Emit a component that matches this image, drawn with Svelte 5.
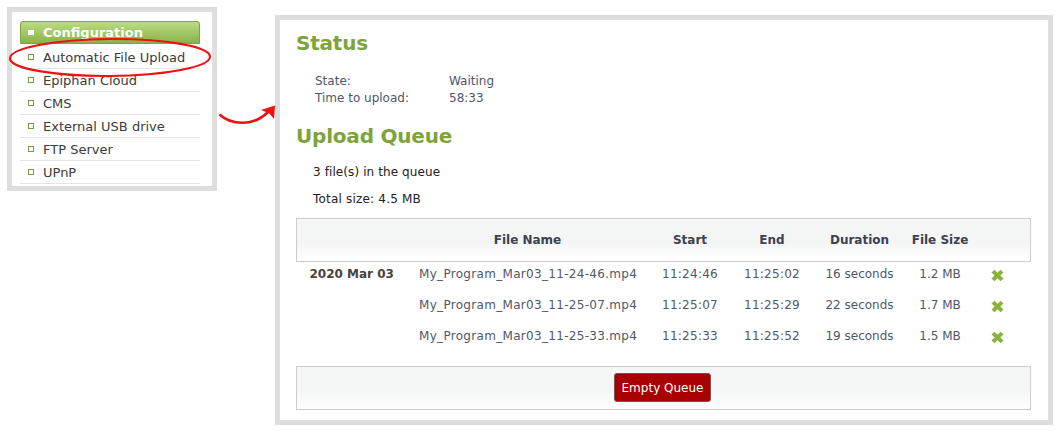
<script lang="ts">
  const menu = ['Automatic File Upload', 'Epiphan Cloud', 'CMS', 'External USB drive', 'FTP Server', 'UPnP'];
  const files = [
    { date: '2020 Mar 03', name: 'My_Program_Mar03_11-24-46.mp4', start: '11:24:46', end: '11:25:02', duration: '16 seconds', size: '1.2 MB' },
    { date: '', name: 'My_Program_Mar03_11-25-07.mp4', start: '11:25:07', end: '11:25:29', duration: '22 seconds', size: '1.7 MB' },
    { date: '', name: 'My_Program_Mar03_11-25-33.mp4', start: '11:25:33', end: '11:25:52', duration: '19 seconds', size: '1.5 MB' }
  ];
</script>

<div class="page">
  <aside class="side">
    <div class="side-head"><span class="head-dot"></span>Configuration</div>
    <ul>
      {#each menu as item}
        <li><span class="bullet"></span>{item}</li>
      {/each}
    </ul>
  </aside>

  <main class="panel">
    <h2>Status</h2>
    <dl class="status">
      <dt>State:</dt><dd>Waiting</dd>
      <dt>Time to upload:</dt><dd>58:33</dd>
    </dl>
    <h2 class="queue-title">Upload Queue</h2>
    <p class="count">3 file(s) in the queue</p>
    <p class="total">Total size: 4.5 MB</p>

    <table>
      <thead>
        <tr>
          <th class="c-date"></th>
          <th class="c-name">File Name</th>
          <th class="c-start">Start</th>
          <th class="c-end">End</th>
          <th class="c-dur">Duration</th>
          <th class="c-size">File Size</th>
          <th class="c-del"></th>
        </tr>
      </thead>
      <tbody>
        {#each files as f}
          <tr>
            <td class="date">{f.date}</td>
            <td class="name">{f.name}</td>
            <td class="time">{f.start}</td>
            <td class="time">{f.end}</td>
            <td>{f.duration}</td>
            <td>{f.size}</td>
            <td class="del">
              <svg width="13" height="13" viewBox="0 0 13 13" aria-label="Remove">
                <path d="M3.400 .8 6.500 3.700 9.600 .8 12.500 3.500 9.400 6.500 12.500 9.500 9.600 12.200 6.500 9.300 3.400 12.200 .5 9.500 3.600 6.500 .5 3.500Z" fill="#8ab33c" />
              </svg>
            </td>
          </tr>
        {/each}
      </tbody>
    </table>

    <div class="actions">
      <button>Empty Queue</button>
    </div>
  </main>

  <svg class="marks" width="1060" height="436" viewBox="0 0 1060 436" fill="none">
    <ellipse cx="110" cy="57.500" rx="100" ry="18.500" stroke="#ee1111" stroke-width="2.200" transform="rotate(-0.5 110 58)" />
    <path d="M219.500 114.500C231 125 253 127 268 112" stroke="#ee1111" stroke-width="2.600" />
    <path d="M275 105.500 274 119 269.500 113.500 261 110Z" fill="#ee1111" />
  </svg>
</div>

<style>
  :global(body) {
    margin: 0;
    background: #fff;
  }

  .page {
    position: relative;
    width: 1060px;
    height: 436px;
    overflow: hidden;
    display: flex;
    align-items: flex-start;
    font-family: "DejaVu Sans", Verdana, sans-serif;
    color: #3b3b3b;
  }

  .side {
    box-sizing: border-box;
    width: 210px;
    height: 184px;
    margin: 7px 0 0 7px;
    padding: 9px 12px 0 8px;
    border: 5px solid #dedede;
  }

  .side-head {
    box-sizing: border-box;
    height: 23px;
    display: flex;
    align-items: center;
    padding-left: 7px;
    font-size: 13px;
    font-weight: 700;
    color: #fff;
    background: linear-gradient(#bcdc84, #8ab24a);
    border: 1px solid #7fa342;
    border-radius: 3px 3px 0 0;
  }

  .head-dot {
    width: 6px;
    height: 5px;
    margin-right: 9px;
    background: #fff;
  }

  ul {
    list-style: none;
    margin: 2px 0 0;
    padding: 0;
  }

  li {
    box-sizing: border-box;
    height: 23px;
    display: flex;
    align-items: center;
    padding: 1px 0 0 8px;
    font-size: 13px;
    border-bottom: 1px solid #e4e4e4;
  }

  .bullet {
    box-sizing: border-box;
    width: 6px;
    height: 6px;
    margin: 0 9px 2px 0;
    border: 1px solid #7a9c3c;
  }

  .panel {
    box-sizing: border-box;
    width: 778px;
    height: 410px;
    margin: 15px 0 0 58px;
    padding: 10px 16px 0;
    border: 5px solid #dedede;
  }

  h2 {
    margin: 0;
    font-size: 20px;
    line-height: 26px;
    font-weight: 700;
    letter-spacing: -0.2px;
    color: #7ea33d;
  }

  .status {
    display: grid;
    grid-template-columns: 134px auto;
    margin: 17px 0 0 19px;
    font-size: 12px;
    line-height: 17px;
    color: #50566a;
  }

  dd,
  dt {
    margin: 0;
  }

  .queue-title {
    margin-top: 16px;
  }

  .count,
  .total {
    margin: 0 0 0 17px;
    font-size: 12px;
    line-height: 16px;
    color: #222;
  }

  .count {
    margin-top: 15px;
    letter-spacing: 0.1px;
  }

  .total {
    margin-top: 11px;
    letter-spacing: 0.2px;
  }

  table {
    width: 735px;
    margin-top: 11px;
    table-layout: fixed;
    border-collapse: collapse;
    font-size: 12px;
    color: #50566a;
  }

  th {
    height: 41px;
    padding: 0 0 1px;
    font-weight: 700;
    color: #3d4150;
    background: linear-gradient(#f4f5f5 55%, #fff);
    border-top: 1px solid #ccc;
    border-bottom: 1px solid #ccc;
  }

  th:first-child {
    border-left: 1px solid #ccc;
  }

  th:last-child {
    border-right: 1px solid #ccc;
  }

  .c-date { width: 122px; }
  .c-name { width: 231px; padding-right: 14px; box-sizing: border-box; }
  .c-start { width: 80px; }
  .c-end { width: 84px; }
  .c-dur { width: 91px; }
  .c-size { width: 70px; }

  td {
    height: 31px;
    padding: 0 0 6px;
    text-align: center;
    box-sizing: border-box;
  }

  td.date {
    padding-left: 13px;
    text-align: left;
    font-weight: 700;
    color: #4a4238;
  }

  td.name {
    text-align: left;
    letter-spacing: 0.31px;
  }

  td.time {
    letter-spacing: 0.25px;
  }

  td.del {
    padding: 0 10px 3px 0;
  }

  td.del svg {
    display: block;
    margin: 0 auto;
  }

  .actions {
    box-sizing: border-box;
    width: 735px;
    height: 44px;
    margin-top: 11px;
    padding-right: 2px;
    display: flex;
    align-items: center;
    justify-content: center;
    background: linear-gradient(#f4f5f5 55%, #fff);
    border: 1px solid #ccc;
  }

  button {
    box-sizing: border-box;
    width: 97px;
    height: 29px;
    padding: 0;
    font: 12px "DejaVu Sans", Verdana, sans-serif;
    color: #fff;
    background: #a80000;
    border: 1px solid #7a5050;
    border-radius: 3px;
  }

  .marks {
    position: absolute;
    inset: 0;
    pointer-events: none;
  }
</style>
